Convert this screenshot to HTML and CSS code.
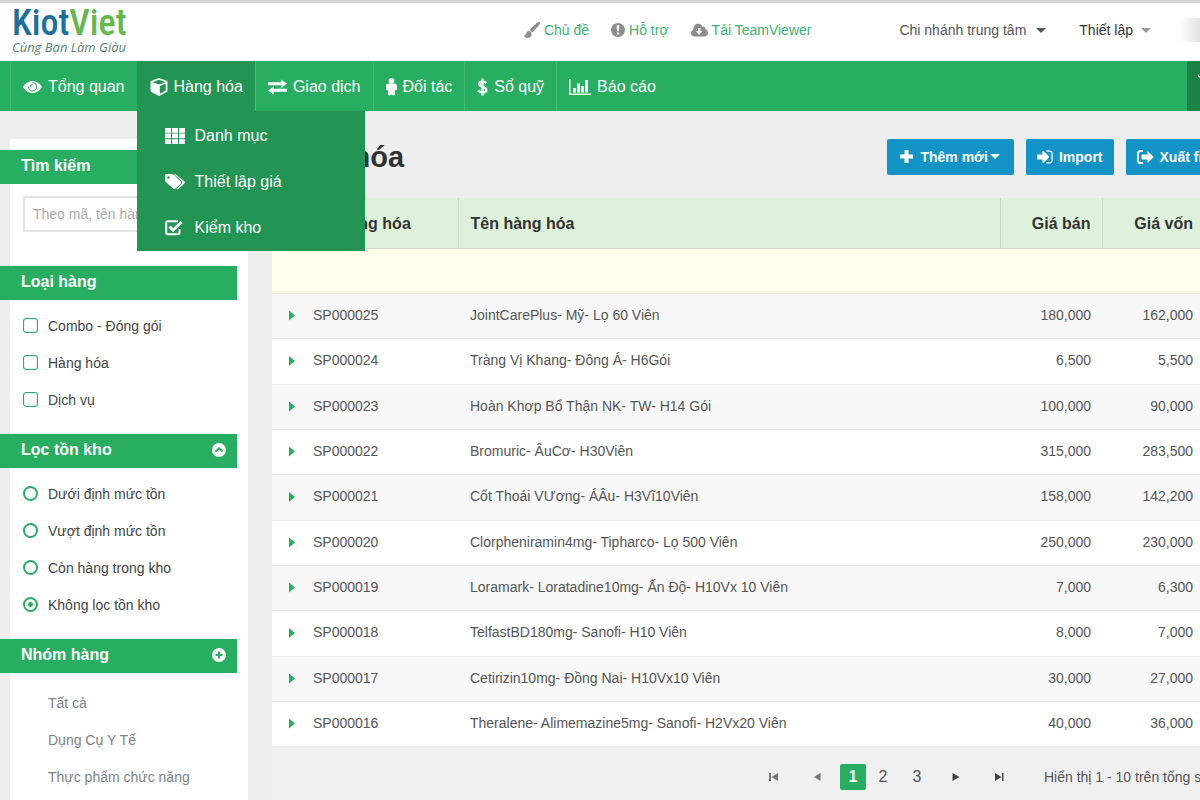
FILE: index.html
```
<!DOCTYPE html>
<html lang="vi">
<head>
<meta charset="utf-8">
<title>KiotViet - Hàng hóa</title>
<link rel="stylesheet" href="styles.css">
</head>
<body>
<header class="topbar">
  <a class="logo" href="#"><span class="logo-name"><span class="logo-kiot">Kiot</span><span class="logo-viet">Viet</span></span><span class="logo-tag">Cùng Bạn Làm Giàu</span></a>
  <div class="links">
    <a href="#"><svg width="16" height="16" viewBox="0 0 16 16"><path d="M15.600.5c-.6-.7-1.500-.5-2.200.1L6.700 7.300c-.4.4-.4.900-.2 1.300.5.300 1 .8 1.200 1.300.5.200 1 .1 1.400-.4l6.300-7.300c.6-.6.6-1.200.2-1.700zM5.500 9.200c-1.500-.3-2.700.6-3 2C2.200 12.800 1.200 13.600 0 13.700c1.200 1.600 3 2.200 4.600 1.900 1.900-.4 2.800-1.900 2.600-3.700-.1-1.300-.7-2.400-1.700-2.700z" stroke="currentColor" stroke-width=".6"/></svg>Chủ đề</a>
    <a href="#"><svg width="14" height="14" viewBox="0 0 14 14"><path fill-rule="evenodd" d="M7 0a7 7 0 1 0 0 14A7 7 0 0 0 7 0zM5.700 2.300h2.600L8 8.300H6zM5.900 9.400h2.200v2.200H5.900z"/></svg>Hỗ trợ</a>
    <a href="#"><svg width="17" height="14" viewBox="0 0 17 14"><path fill-rule="evenodd" d="M3.800 13.500C1.500 13.500 0 12 0 10c0-1.600.9-2.800 2.300-3.300C2.100 3.200 4.200.8 7 .8c2.200 0 3.700 1.200 4.400 2.900 1.700-.5 3.200.7 3 2.500 1.500.4 2.600 1.700 2.600 3.500 0 2.200-1.700 3.800-3.800 3.800zM6.900 5v3H4.700l3.500 3.800L11.700 8H9.500V5z"/></svg>Tải TeamViewer</a>
  </div>
  <div class="account">
    <button class="menu-btn">Chi nhánh trung tâm<i class="caret"></i></button>
    <button class="menu-btn strong">Thiết lập<i class="caret light"></i></button>
    <span class="user-blur"></span>
  </div>
</header>

<nav class="nav">
  <ul class="nav-list">
    <li><a href="#"><svg width="19" height="14" viewBox="0 0 19 14"><path fill-rule="evenodd" d="M9.500 1C5.500 1 2 3.400 0 7c2 3.600 5.500 6 9.500 6s7.500-2.400 9.500-6c-2-3.600-5.500-6-9.500-6zM9.500 2.200a4.600 4.600 0 0 1 4.600 4.600 4.600 4.600 0 0 1-9.200 0h1a3.600 3.600 0 0 0 7.200 0 3.600 3.600 0 0 0-3.600-3.600zM9.500 4.100v1.100c-.9 0-1.600.7-1.600 1.600H6.800c0-1.500 1.200-2.700 2.700-2.700z"/></svg>Tổng quan</a></li>
    <li class="active"><a href="#"><svg width="18" height="18" viewBox="0 0 18 18"><path fill-rule="evenodd" d="M9 0l7.500 2.700c.6.200 1 .7 1 1.300v8.700c0 .5-.3 1-.8 1.300l-7 3.800c-.5.200-1 .2-1.400 0l-7-3.800c-.5-.3-.8-.8-.8-1.300V4c0-.6.4-1.100 1-1.300zM9 1.800L2.500 4.200 9 6.600l6.500-2.400zM9.800 15.700l5.900-3.200V5.800L9.800 8z"/></svg>Hàng hóa</a>
      <ul class="dropdown">
        <li><a href="#"><svg width="20" height="16" viewBox="0 0 20 16"><path d="M0 0h6v4.700H0zM7 0h6v4.700H7zM14 0h6v4.700h-6zM0 5.600h6v4.700H0zM7 5.600h6v4.700H7zM14 5.600h6v4.700h-6zM0 11.200h6v4.700H0zM7 11.200h6v4.700H7zM14 11.200h6v4.700h-6z"/></svg>Danh mục</a></li>
        <li><a href="#"><svg width="20" height="18" viewBox="0 0 20 18"><path fill-rule="evenodd" d="M0 2.500C0 1.700.7 1 1.500 1h5.300c.8 0 1.700.4 2.300 1l6.700 6.400c.6.600.6 1.400 0 2l-5.400 5.400c-.6.600-1.400.6-2 0L1 9.200c-.6-.6-1-1.400-1-2.300zM3.500 3.200a1.300 1.300 0 1 0 0 2.600 1.300 1.300 0 0 0 0-2.600z"/><path d="M8.800 1c1.200 0 2.200.4 2.900 1l7.500 6.300c.7.600.8 1.400.2 2.100l-5.600 5.400c-.6.600-1.500.7-2.200.2l5.100-5.200c.8-.8.8-1.900 0-2.700z"/></svg>Thiết lập giá</a></li>
        <li><a href="#"><svg width="20" height="18" viewBox="0 0 20 18"><path d="M14.500 10v3.500c0 1-.8 1.800-1.800 1.800H3c-1 0-1.800-.8-1.800-1.800V4c0-1 .8-1.800 1.800-1.800h10" fill="none" stroke="#fff" stroke-width="2"/><path d="M4.500 7.500l3.700 3.700L16.500 3" fill="none" stroke="#fff" stroke-width="3"/></svg>Kiểm kho</a></li>
      </ul>
    </li>
    <li><a href="#"><svg width="19" height="16" viewBox="0 0 19 16"><path d="M0 3.300h13V.5L19 4.700l-6 4.200V6.300H0zM19 9.800v3H6v2.900L0 11.400 6 7.200v2.600z"/></svg>Giao dịch</a></li>
    <li><a href="#"><svg width="11" height="18" viewBox="0 0 11 18"><circle cx="5.500" cy="2.800" r="2.800"/><path d="M2.200 5.600h6.600c1.200 0 2.200 1 2.200 2.200v3.400c0 .7-.5 1-1 1s-1-.4-1-1v4.900c0 .8-.6 1.400-1.200 1.400s-1.100-.3-1.300-.8h-2c-.2.500-.7.8-1.300.8-.6 0-1.200-.6-1.200-1.400v-4.900c0 .6-.4 1-1 1s-1-.3-1-1V7.800c0-1.200 1-2.200 2.200-2.200z"/></svg>Đối tác</a></li>
    <li><a href="#"><svg width="11" height="18" viewBox="0 0 11 18"><path d="M9.400 5.200C8.600 4.100 7.300 3.600 5.700 3.600c-2 0-3.500.8-3.500 2.400C2.200 9.700 9.300 8 9.300 11.900c0 1.700-1.500 2.600-3.600 2.600-1.900 0-3.500-.7-4.500-2M5.500.5v17" fill="none" stroke="#fff" stroke-width="2.400"/></svg>Sổ quỹ</a></li>
    <li><a href="#"><svg width="22" height="18" viewBox="0 0 22 18"><path d="M0 1h1.500v14.500H22V17H0zM4 10h3v4.500H4zM8 5.500h3v9H8zM12 8h3v6.500h-3zM16 2h3v12.500h-3z"/></svg>Báo cáo</a></li>
  </ul>
  <button class="nav-cart" aria-label="Bán hàng"><svg width="16" height="16" viewBox="0 0 16 16"><path d="M2 1l1 2h12l-2 7H7L5 5 2 4z"/></svg></button>
</nav>

<div class="page">
  <aside class="sidebar">
    <section>
      <h2 class="bar"><label for="search">Tìm kiếm</label></h2>
      <div class="search"><input id="search" type="text" placeholder="Theo mã, tên hàng hóa"></div>
    </section>
    <section>
      <h2 class="bar">Loại hàng</h2>
      <div class="options">
        <label><input type="checkbox">Combo - Đóng gói</label>
        <label><input type="checkbox">Hàng hóa</label>
        <label><input type="checkbox">Dịch vụ</label>
      </div>
    </section>
    <section>
      <h2 class="bar">Lọc tồn kho<button class="bar-btn" aria-label="Thu gọn"><svg width="14" height="14" viewBox="0 0 14 14"><circle cx="7" cy="7" r="7"/><path d="M3.500 8.500L7 5.300l3.500 3.200" fill="none" stroke="#27ae60" stroke-width="2"/></svg></button></h2>
      <div class="options">
        <label><input type="radio" name="stock">Dưới định mức tồn</label>
        <label><input type="radio" name="stock">Vượt định mức tồn</label>
        <label><input type="radio" name="stock">Còn hàng trong kho</label>
        <label><input type="radio" name="stock" checked>Không lọc tồn kho</label>
      </div>
    </section>
    <section>
      <h2 class="bar">Nhóm hàng<button class="bar-btn" aria-label="Thêm nhóm"><svg width="14" height="14" viewBox="0 0 14 14"><circle cx="7" cy="7" r="7"/><path d="M7 3.500v7M3.500 7h7" fill="none" stroke="#27ae60" stroke-width="2"/></svg></button></h2>
      <ul class="groups">
        <li><a href="#">Tất cả</a></li>
        <li><a href="#">Dụng Cụ Y Tế</a></li>
        <li><a href="#">Thực phẩm chức năng</a></li>
      </ul>
    </section>
  </aside>

  <main class="main">
    <div class="heading">
      <h1>Hàng hóa</h1>
      <div class="actions">
        <button class="btn"><svg width="15" height="15" viewBox="0 0 15 15"><path d="M5.500 1h4v4.500H14v4H9.500V14h-4V9.500H1v-4h4.500z"/></svg>Thêm mới<i class="caret white"></i></button>
        <button class="btn"><svg width="16" height="18" viewBox="128 0 1536 1792"><path d="M1312 896q0 26-19 45l-544 544q-19 19-45 19t-45-19-19-45v-288h-448q-26 0-45-19t-19-45v-384q0-26 19-45t45-19h448v-288q0-26 19-45t45-19 45 19l544 544q19 19 19 45zm352-352v704q0 119-84.500 203.500t-203.500 84.500h-320q-13 0-22.500-9.500t-9.500-22.500q0-4-1-20t-.5-26.500 3-23.500 10-19.500 20.500-6.500h320q66 0 113-47t47-113v-704q0-66-47-113t-113-47h-312l-11.500-1-11.500-3-8-5.500-7-9-2-13.500q0-4-1-20t-.5-26.500 3-23.500 10-19.500 20.500-6.500h320q119 0 203.500 84.500t84.500 203.500z"/></svg>Import</button>
        <button class="btn"><svg width="17" height="18" viewBox="1 0 17 18"><path d="M7 3H4.500C3 3 2 4 2 5.500v7C2 14 3 15 4.500 15H7" fill="none" stroke="#fff" stroke-width="2"/><path d="M17.800 9L11.500 3v3.500H6.300c-.4 0-.8.3-.8.8v3.400c0 .5.4.8.8.8h5.200V15z"/></svg>Xuất file</button>
      </div>
    </div>
    <table class="grid">
      <colgroup><col class="c-exp"><col class="c-code"><col><col class="c-num"><col class="c-num"></colgroup>
      <thead><tr><th></th><th>Mã hàng hóa</th><th class="sep">Tên hàng hóa</th><th class="sep num">Giá bán</th><th class="sep num">Giá vốn</th></tr></thead>
      <tbody>
        <tr class="filter"><td colspan="5"></td></tr>
        <tr><td><button class="exp" aria-label="Mở rộng"></button></td><td>SP000025</td><td>JointCarePlus- Mỹ- Lọ 60 Viên</td><td class="num">180,000</td><td class="num">162,000</td></tr>
        <tr><td><button class="exp" aria-label="Mở rộng"></button></td><td>SP000024</td><td>Tràng Vị Khang- Đông Á- H6Gói</td><td class="num">6,500</td><td class="num">5,500</td></tr>
        <tr><td><button class="exp" aria-label="Mở rộng"></button></td><td>SP000023</td><td>Hoàn Khơp Bổ Thận NK- TW- H14 Gói</td><td class="num">100,000</td><td class="num">90,000</td></tr>
        <tr><td><button class="exp" aria-label="Mở rộng"></button></td><td>SP000022</td><td>Bromuric- ÂuCơ- H30Viên</td><td class="num">315,000</td><td class="num">283,500</td></tr>
        <tr><td><button class="exp" aria-label="Mở rộng"></button></td><td>SP000021</td><td>Cốt Thoái VƯơng- ÁÂu- H3Vĩ10Viên</td><td class="num">158,000</td><td class="num">142,200</td></tr>
        <tr><td><button class="exp" aria-label="Mở rộng"></button></td><td>SP000020</td><td>Clorpheniramin4mg- Tipharco- Lọ 500 Viên</td><td class="num">250,000</td><td class="num">230,000</td></tr>
        <tr><td><button class="exp" aria-label="Mở rộng"></button></td><td>SP000019</td><td>Loramark- Loratadine10mg- Ấn Độ- H10Vx 10 Viên</td><td class="num">7,000</td><td class="num">6,300</td></tr>
        <tr><td><button class="exp" aria-label="Mở rộng"></button></td><td>SP000018</td><td>TelfastBD180mg- Sanofi- H10 Viên</td><td class="num">8,000</td><td class="num">7,000</td></tr>
        <tr><td><button class="exp" aria-label="Mở rộng"></button></td><td>SP000017</td><td>Cetirizin10mg- Đồng Nai- H10Vx10 Viên</td><td class="num">30,000</td><td class="num">27,000</td></tr>
        <tr><td><button class="exp" aria-label="Mở rộng"></button></td><td>SP000016</td><td>Theralene- Alimemazine5mg- Sanofi- H2Vx20 Viên</td><td class="num">40,000</td><td class="num">36,000</td></tr>
      </tbody>
    </table>
    <div class="pager">
      <button class="arrow dim" aria-label="Trang đầu"><svg width="10" height="10" viewBox="0 0 10 10"><path d="M0 1h2v8H0zM9 1v8L2.500 5z"/></svg></button>
      <button class="arrow dim" aria-label="Trang trước"><svg width="10" height="10" viewBox="0 0 10 10"><path d="M8.500 1v8L2 5z"/></svg></button>
      <button class="pg current">1</button>
      <button class="pg">2</button>
      <button class="pg">3</button>
      <button class="arrow" aria-label="Trang sau"><svg width="10" height="10" viewBox="0 0 10 10"><path d="M1.500 1v8L8.500 5z"/></svg></button>
      <button class="arrow" aria-label="Trang cuối"><svg width="10" height="10" viewBox="0 0 10 10"><path d="M1 1v8l6.500-4zM8 1h1.500v8H8z"/></svg></button>
      <span class="info">Hiển thị 1 - 10 trên tổng số</span>
    </div>
  </main>
</div>
</body>
</html>
```
FILE: styles.css
```
* { box-sizing: border-box; }
body {
  margin: 0;
  min-height: 100vh;
  overflow: hidden;
  background: #eee;
  color: #555;
  font: 14px/18px "Liberation Sans", Arial, sans-serif;
  display: flex;
  flex-direction: column;
}
ul { list-style: none; margin: 0; padding: 0; }
a { color: inherit; text-decoration: none; }
button { border: 0; padding: 0; background: none; color: inherit; font: inherit; cursor: pointer; }
svg { display: block; flex: none; fill: currentColor; }

.caret { border: 5px solid transparent; border-top-color: #555; border-bottom: 0; }
.caret.light { border-top-color: #999; }
.caret.white { border-top-color: #fff; margin-left: -4px; }

/* Top bar */
.topbar {
  height: 61px;
  flex: none;
  display: flex;
  align-items: center;
  background: #fff;
  border-top: 3px solid #d3d5d5;
  padding: 0 0 4px 12px;
  white-space: nowrap;
}
.logo { display: flex; flex-direction: column; width: 240px; }
.logo-name { font: 500 36px/34px "Roboto Condensed", Roboto, sans-serif; }
.logo-kiot { color: #1b6f9f; }
.logo-viet { color: #64b84c; }
.logo-tag { font: italic 13px/14px "Open Sans", sans-serif; color: #5c7f70; }
.links { display: flex; gap: 22px; margin-left: auto; color: #3cb371; }
.links a { display: flex; align-items: center; gap: 4px; }
.links svg { color: #8c8c8c; }
.account { display: flex; align-items: center; margin-left: 88px; }
.menu-btn { display: flex; align-items: center; gap: 10px; margin-right: 33px; }
.menu-btn.strong { color: #333; gap: 8px; margin-right: 29px; }
.user-blur { width: 20px; height: 24px; background: linear-gradient(90deg, #fff, #e2e2e2); }

/* Navigation */
.nav {
  height: 50px;
  flex: none;
  display: flex;
  justify-content: space-between;
  background: #27ae60;
  color: #fff;
  font-size: 16px;
  padding-left: 10px;
}
.nav-list { display: flex; }
.nav-list > li { position: relative; border-left: 1px solid #45bb76; }
.nav-list > li > a { display: flex; align-items: center; gap: 6px; height: 50px; padding: 2px 12px 0; }
.nav-list > .active { background: #229454; border-left-color: #229454; }
.dropdown {
  position: absolute;
  z-index: 5;
  top: 50px;
  left: -1px;
  width: 228px;
  padding-top: 2px;
  background: #229454;
}
.dropdown a { display: flex; align-items: center; gap: 10px; height: 46px; padding-left: 28px; }
.nav-cart { width: 13px; overflow: hidden; background: #1c8145; color: #fff; padding: 0 0 10px 9px; }

/* Page */
.page { display: flex; flex: 1; min-height: 0; padding-left: 10px; }
.sidebar { flex: none; width: 238px; margin-top: 28px; padding-top: 11px; background: #fff; color: #444; }
.bar {
  display: flex;
  align-items: center;
  justify-content: space-between;
  height: 34px;
  margin: 0 11px 0 -10px;
  padding: 0 11px 2px 21px;
  background: #27ae60;
  color: #fff;
  font-size: 16px;
}
.search { padding: 12px 11px 34px 13px; }
.search input {
  width: 100%;
  height: 36px;
  border: 2px solid #e3e3e3;
  padding: 0 8px;
  font: inherit;
  color: #555;
}
.search input::placeholder { color: #aaa; }
.options { padding: 7px 0 16px 13px; }
.options label { display: flex; align-items: center; gap: 10px; height: 37px; }
.options input { appearance: none; flex: none; width: 15px; height: 15px; margin: 0; background: #fff; border: 1px solid #27ae60; }
.options input[type="checkbox"] { border-radius: 3px; box-shadow: inset 0 0 1px #27ae60; }
.options input[type="radio"] { border-width: 2px; border-radius: 50%; }
.options input[type="radio"]:checked { background: radial-gradient(#27ae60 2px, #fff 3px); }
.groups { padding: 12px 0 0 38px; color: #7b8288; }
.groups a { display: block; line-height: 37px; }

.main { flex: 1; min-width: 0; margin: 0 -4px 0 24px; }
.heading { display: flex; align-items: center; justify-content: space-between; height: 87px; padding-top: 4px; }
h1 { margin: 0; color: #333; font-size: 29px; line-height: 36px; }
.actions { display: flex; gap: 12px; margin-right: -21px; }
.btn {
  display: flex;
  align-items: center;
  gap: 6px;
  height: 36px;
  padding: 0 11px;
  border-radius: 2px;
  background: #1494c6;
  color: #fff;
  font-weight: bold;
  white-space: nowrap;
}
.btn:first-child { padding: 0 14px 0 12px; }

/* Product table */
.grid { width: 100%; table-layout: fixed; border-collapse: collapse; }
.c-exp { width: 29px; }
.c-code { width: 157px; }
.c-num { width: 102px; }
.grid th, .grid td { padding: 0 12px; text-align: left; white-space: nowrap; }
.grid th { height: 50px; padding-top: 3px; background: #def2db; border-bottom: 1px solid #cfdccb; color: #333; font-size: 16px; }
.grid .sep { border-left: 1px solid #cbdcc8; }
.grid .num { text-align: right; padding-right: 11px; }
.grid td { height: 45px; padding-bottom: 2px; background: #fff; border-bottom: 1px solid #eaeaea; }
.grid tr:nth-child(3n) td { height: 46px; }
.grid tr:nth-child(even) td { background: #f8f8f8; }
.grid .filter td { background: #fffeea; }
.grid td:first-child { padding: 0 0 0 17px; }
.exp { display: block; width: 6px; height: 10px; background: #27ae60; clip-path: polygon(0 0, 100% 50%, 0 100%); }

/* Pager */
.pager { display: flex; align-items: center; justify-content: flex-end; height: 60px; margin-right: -5px; background: #f0f0f0; white-space: nowrap; }
.arrow { display: flex; justify-content: center; width: 43px; color: #444; }
.arrow.dim { color: #777; }
.pg { width: 34px; height: 26px; }
.pg { font-size: 16px; }
.pg.current { width: 26px; margin-left: 2px; border-radius: 2px; background: #27ae60; color: #fff; font-weight: bold; }
.info { padding-left: 24px; }
```
